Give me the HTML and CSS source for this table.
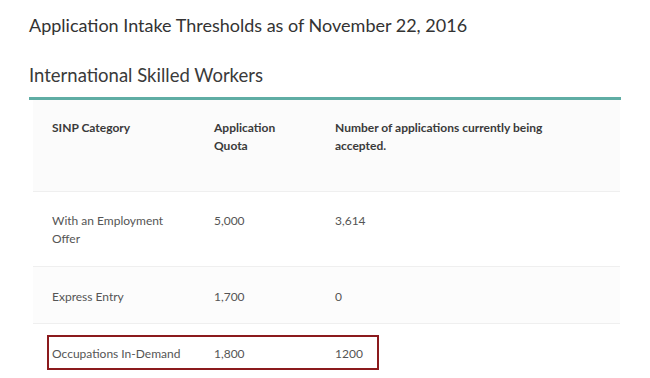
FILE: index.html
```html
<!DOCTYPE html>
<html lang="en">
<head>
<meta charset="utf-8">
<link rel="stylesheet" href="styles.css">
</head>
<body>
<div class="page">
  <h1 class="title">Application Intake Thresholds as of November 22, 2016</h1>
  <h2 class="subtitle">International Skilled Workers</h2>
  <div class="table">
    <div class="row head">
      <div>SINP Category</div>
      <div>Application<br>Quota</div>
      <div>Number of applications currently being<br>accepted.</div>
    </div>
    <div class="row r1">
      <div>With an Employment<br>Offer</div>
      <div>5,000</div>
      <div>3,614</div>
    </div>
    <div class="row r2 shade">
      <div>Express Entry</div>
      <div>1,700</div>
      <div>0</div>
    </div>
    <div class="row r3">
      <div>Occupations In-Demand</div>
      <div>1,800</div>
      <div>1200</div>
      <span class="highlight"></span>
    </div>
  </div>
</div>
</body>
</html>
```
FILE: styles.css
```css
html, body { margin: 0; padding: 0; background: #fff; }
body { width: 650px; height: 378px; overflow: hidden; font-family: "Lato", "Open Sans", sans-serif; }
.page { padding: 0 29px; }
.title { margin: 0; padding-top: 12px; font-size: 18px; line-height: 26px; font-weight: 400; color: #333; }
.subtitle { margin: 0; padding-top: 24px; padding-bottom: 9px; font-size: 18.5px; line-height: 26px; font-weight: 400; color: #3a3a3a; border-bottom: 3px solid #5fada4; }
.table { margin: 0 0 0 4px; width: 587px; }
.row { display: grid; grid-template-columns: 162px 121px 1fr; padding-left: 19px; font-size: 12px; line-height: 18px; color: #555; border-bottom: 1px solid #efefef; position: relative; }
.head { padding-top: 19px; height: 72px; background: #fbfbfb; color: #3a3a3a; font-weight: 700; }
.r1 { padding-top: 20px; height: 54px; }
.r2 { padding-top: 21px; height: 35px; }
.r3 { padding-top: 21px; height: 40px; border-bottom: none; }
.shade { background: #fcfcfc; }
.highlight { position: absolute; left: 14px; top: 11px; width: 328px; height: 31px; border: 2px solid #8b1a1d; }
```
